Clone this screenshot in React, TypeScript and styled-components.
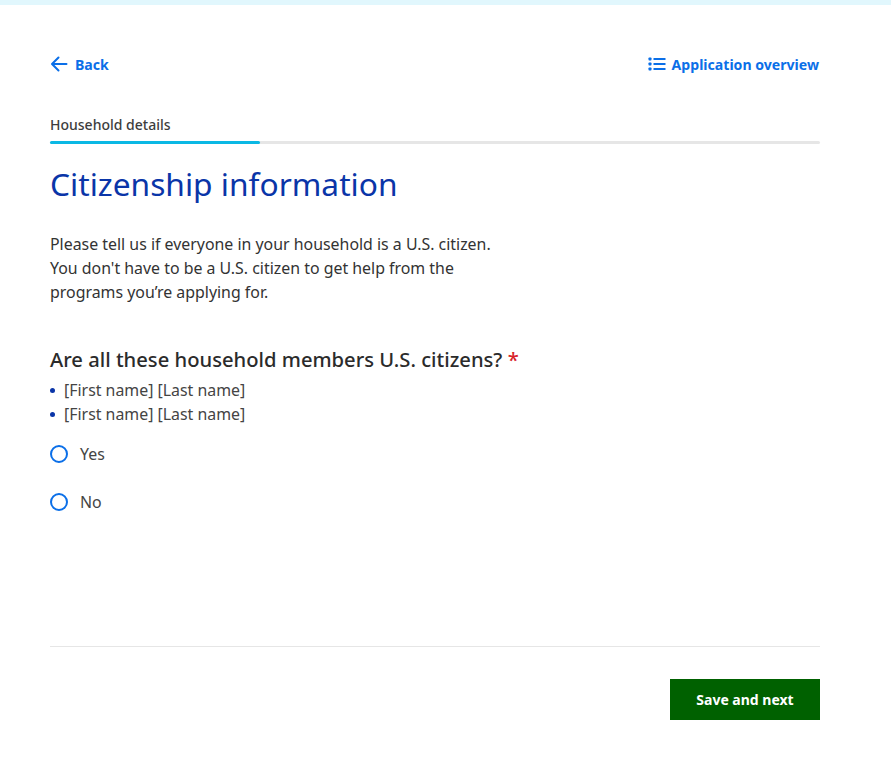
import React from "react";
import styled, { createGlobalStyle } from "styled-components";

const GlobalStyle = createGlobalStyle`
  html, body {
    margin: 0;
    padding: 0;
    background: #fff;
    font-family: "Noto Sans", "Open Sans", sans-serif;
    color: #333;
  }
`;

const Page = styled.div`
  width: 891px;
  height: 784px;
  overflow: hidden;
  box-sizing: border-box;
  border-top: 5px solid #e1f7fd;
`;

const Content = styled.main`
  width: 770px;
  margin-left: 50px;
`;

const TopBar = styled.div`
  display: flex;
  justify-content: space-between;
  align-items: center;
  height: 30px;
  margin-top: 44px;
`;

const TopLink = styled.a`
  display: flex;
  align-items: center;
  gap: ${(p: { $gap: number }) => p.$gap}px;
  margin-right: 1px;
  font-size: 14.1px;
  font-weight: 700;
  color: #0b6fe8;
  text-decoration: none;
`;

const SectionLabel = styled.div`
  margin-top: 36px;
  font-size: 14px;
  line-height: 20px;
  font-weight: 500;
  color: #3d3d3d;
`;

const Progress = styled.div`
  height: 3px;
  margin-top: 6px;
  background: #e6e6e6;
  border-radius: 2px;
`;

const ProgressFill = styled.div`
  height: 100%;
  background: #0bb8e4;
  border-radius: 2px;
`;

const Title = styled.h1`
  margin: 18px 0 0;
  font-size: 31.7px;
  line-height: 44px;
  font-weight: 400;
  color: #0a35a8;
`;

const Intro = styled.p`
  width: 470px;
  margin: 26px 0 0;
  font-size: 15.9px;
  line-height: 24px;
  color: #333;
`;

const Question = styled.h2`
  margin: 41px 0 0;
  font-size: 20.2px;
  line-height: 28px;
  font-weight: 500;
  color: #2b2b2b;
`;

const Required = styled.span`
  color: #d8232a;
`;

const Names = styled.ul`
  list-style: none;
  margin: 5px 0 0;
  padding: 0;
`;

const Name = styled.li`
  display: flex;
  align-items: center;
  gap: 9px;
  font-size: 15.9px;
  line-height: 24px;
  color: #444;

  &::before {
    content: "";
    width: 5px;
    height: 5px;
    border-radius: 50%;
    background: #0a35a8;
  }
`;

const Options = styled.div`
  display: flex;
  flex-direction: column;
  gap: 24px;
  margin-top: 16px;
`;

const Option = styled.label`
  display: flex;
  align-items: center;
  gap: 12px;
  height: 24px;
  font-size: 15.9px;
  color: #444;
`;

const RadioCircle = styled.span`
  width: 18px;
  height: 18px;
  box-sizing: border-box;
  border: 2px solid #0b6fe8;
  border-radius: 50%;
`;

const Footer = styled.div`
  display: flex;
  justify-content: flex-end;
  margin-top: 132px;
  padding-top: 32px;
  border-top: 1px solid #e6e6e6;
`;

const SaveButton = styled.button`
  width: 150px;
  height: 41px;
  border: none;
  background: #006100;
  color: #fff;
  font-family: inherit;
  font-size: 14px;
  font-weight: 700;
`;

const BackIcon = () => (
  <svg width="18" height="18" viewBox="0 0 18 18" fill="none" stroke="#0b6fe8" strokeWidth="2" strokeLinecap="round" strokeLinejoin="round">
    <path d="M16.5 9H2.5M8.5 2.5 2 9l6.5 6.5" />
  </svg>
);

const ListIcon = () => (
  <svg width="18" height="14" viewBox="0 0 18 14" fill="#0b6fe8">
    <rect x="0.5" y="0.5" width="3" height="3" rx="0.7" />
    <rect x="0.5" y="5.5" width="3" height="3" rx="0.7" />
    <rect x="0.5" y="10.5" width="3" height="3" rx="0.7" />
    <rect x="5.5" y="1" width="12" height="2" />
    <rect x="5.5" y="6" width="12" height="2" />
    <rect x="5.5" y="11" width="12" height="2" />
  </svg>
);

export default function App() {
  const progress = (210 / 770) * 100;

  return (
    <Page>
      <GlobalStyle />
      <Content>
        <TopBar>
          <TopLink href="#" $gap={7}>
            <BackIcon />
            Back
          </TopLink>
          <TopLink href="#" $gap={6}>
            <ListIcon />
            Application overview
          </TopLink>
        </TopBar>
        <SectionLabel>Household details</SectionLabel>
        <Progress>
          <ProgressFill style={{ width: `${progress}%` }} />
        </Progress>
        <Title>Citizenship information</Title>
        <Intro>
          Please tell us if everyone in your household is a U.S. citizen.
          <br />
          You don't have to be a U.S. citizen to get help from the
          <br />
          programs you’re applying for.
        </Intro>
        <Question>
          Are all these household members U.S. citizens? <Required>*</Required>
        </Question>
        <Names>
          <Name>[First name] [Last name]</Name>
          <Name>[First name] [Last name]</Name>
        </Names>
        <Options>
          <Option>
            <RadioCircle />
            Yes
          </Option>
          <Option>
            <RadioCircle />
            No
          </Option>
        </Options>
        <Footer>
          <SaveButton>Save and next</SaveButton>
        </Footer>
      </Content>
    </Page>
  );
}
